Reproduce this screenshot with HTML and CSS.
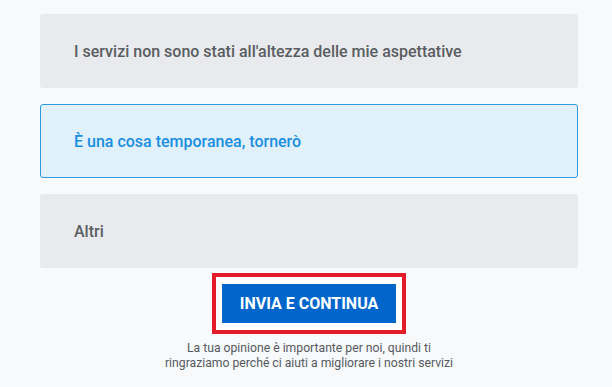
FILE: index.html
```html
<!DOCTYPE html>
<html>
  <head>
    <meta charset="utf-8" />
    <link rel="stylesheet" href="styles.css">
  </head>
  <body>
    <div class="survey">
      <div class="option">I servizi non sono stati all'altezza delle mie aspettative</div>
      <div class="option selected">È una cosa temporanea, tornerò</div>
      <div class="option">Altri</div>

      <div class="submit-area">
        <div class="highlight">
          <button class="submit-btn">INVIA E CONTINUA</button>
        </div>
        <p class="note">
          La tua opinione è importante per noi, quindi ti<br />
          ringraziamo perché ci aiuti a migliorare i nostri servizi
        </p>
      </div>
    </div>
  </body>
</html>
```

FILE: styles.css
```css
:root {
  --bg-page: #f8f9fb;
  --option-bg: #e8eaed;
  --option-text: #5a5d61;
  --selected-bg: #e0f1fc;
  --selected-border: #2e9ae0;
  --selected-text: #1a8ee0;
  --button-bg: #0066cc;
  --highlight: #e31b2a;
  --note-text: #555a5f;
}

body {
  margin: 0;
  background: var(--bg-page);
  font-family: Roboto, "Liberation Sans", sans-serif;
}
.survey {
  width: 538px;
  margin-left: 40px;
  padding-top: 14px;
  display: flex;
  flex-direction: column;
  gap: 16px;
}
.option {
  height: 74px;
  box-sizing: border-box;
  display: flex;
  align-items: center;
  padding: 0 33px;
  background: var(--option-bg);
  border: 1px solid transparent;
  border-radius: 3px;
  color: var(--option-text);
  font-size: 16px;
  font-weight: 500;
}
.option.selected {
  background: var(--selected-bg);
  border-color: var(--selected-border);
  color: var(--selected-text);
}
.submit-area {
  display: flex;
  flex-direction: column;
  align-items: center;
  margin-top: -11px;
}
.highlight {
  border: 4px solid var(--highlight);
  padding: 7px 6px;
  background: #ffffff;
}
.submit-btn {
  display: block;
  width: 174px;
  height: 39px;
  border: 0;
  border-radius: 0;
  background: var(--button-bg);
  color: #ffffff;
  font-family: Roboto, "Liberation Sans", sans-serif;
  font-size: 16px;
  font-weight: 700;
  cursor: pointer;
}
.note {
  margin: 7px 0 0;
  font-size: 12.2px;
  line-height: 15px;
  color: var(--note-text);
  text-align: center;
}
```
